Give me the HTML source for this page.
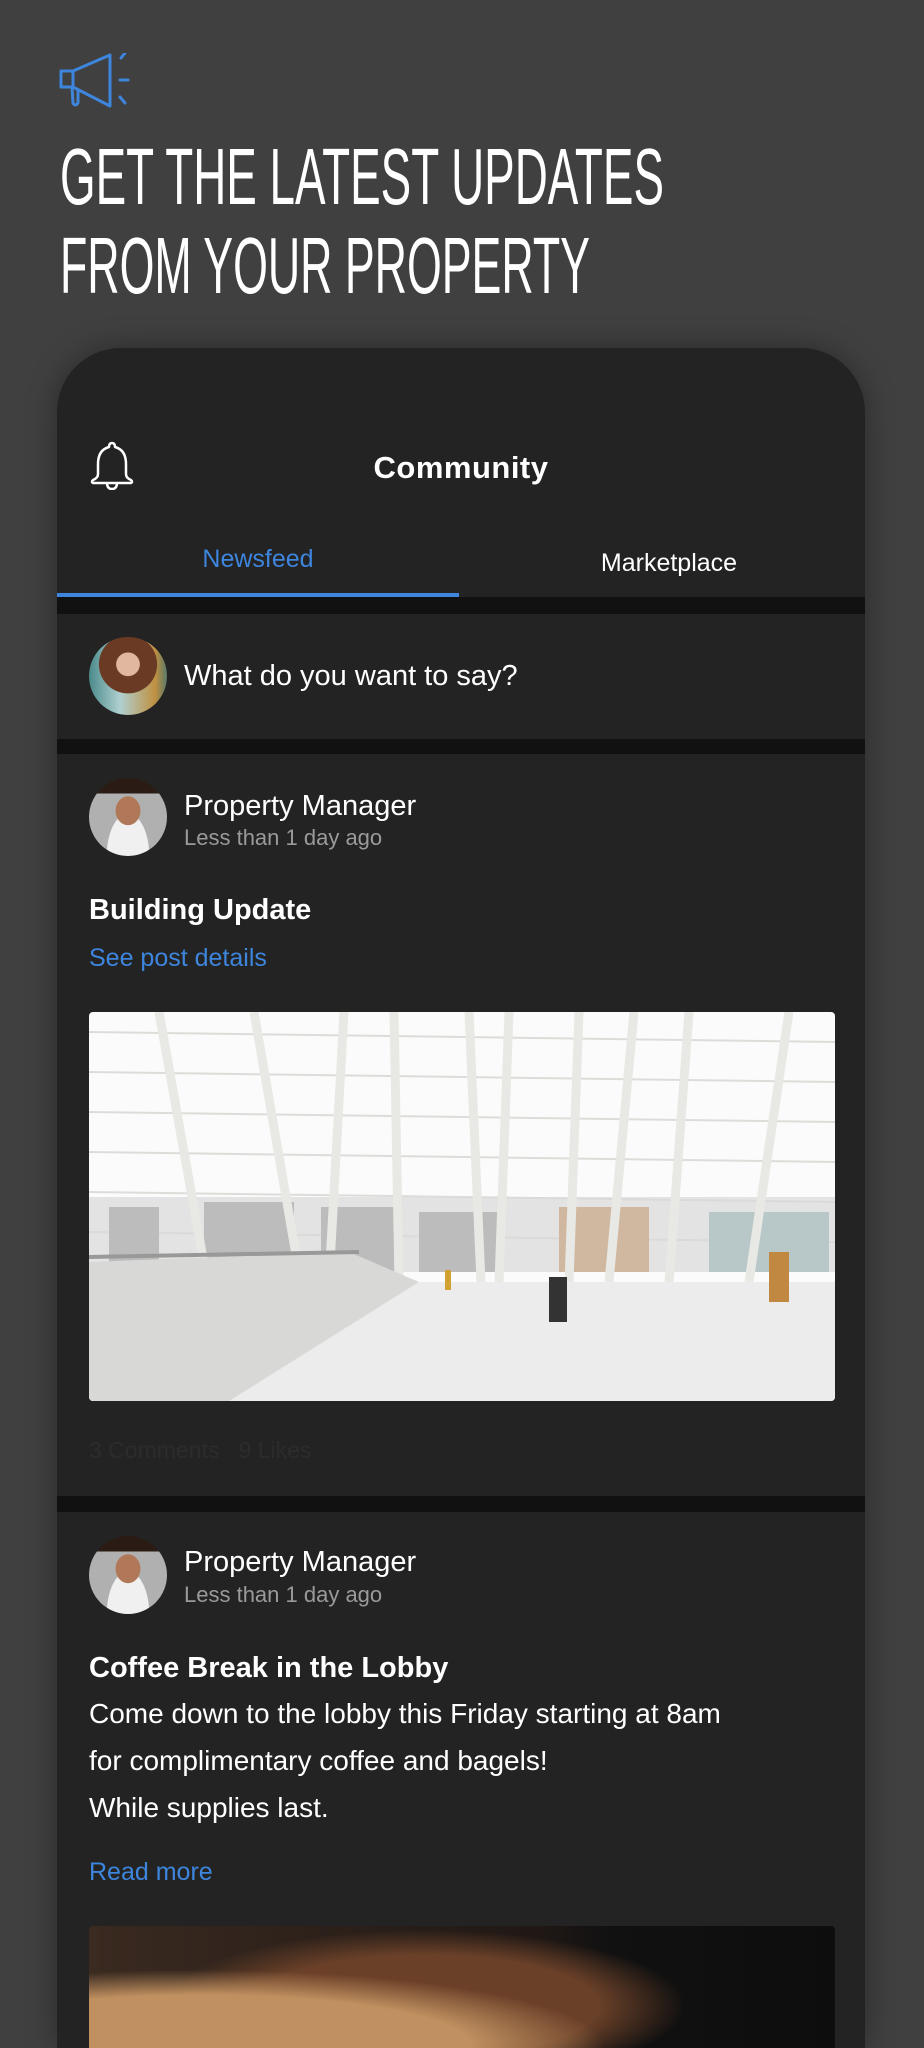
<!DOCTYPE html>
<html><head><meta charset="utf-8"><style>
*{margin:0;padding:0;box-sizing:border-box}
body{width:924px;height:2000px;background:#404040;overflow:hidden;position:relative;font-family:"Liberation Sans",sans-serif}
.a{position:absolute;white-space:nowrap}
.card{position:absolute;left:57px;top:348px;width:808px;height:1700px;background:#232323;border-radius:64px 64px 0 0;box-shadow:0 0 30px rgba(0,0,0,.35);overflow:hidden}
.band{position:absolute;left:0;width:808px;background:#111}
.w{color:#fff}
.blue{color:#3d85dd}
.av{position:absolute;width:78px;height:78px;border-radius:50%;overflow:hidden}
</style></head><body>
<svg class="a" style="left:58px;top:53px" width="74" height="56" viewBox="0 0 74 56" fill="none" stroke="#3d85dd" stroke-width="3" stroke-linecap="round" stroke-linejoin="round">
<path d="M3 18 L3 34 L15 34 L52 53 L52 2 L15 18 Z"/><path d="M15 18 L15 34"/><path d="M14 34 L15 50 Q17 54 20 50 L20 37"/>
<path d="M63 5 L67 0"/><path d="M62 27 L70 27"/><path d="M62 44 L67 50"/>
</svg>
<svg class="a" style="left:0;top:140px" width="924" height="160">
<text x="60" y="64" fill="#fff" font-family="Liberation Sans Narrow, Liberation Sans, sans-serif" font-size="80" textLength="604" lengthAdjust="spacingAndGlyphs">GET THE LATEST UPDATES</text>
<text x="60" y="153" fill="#fff" font-family="Liberation Sans Narrow, Liberation Sans, sans-serif" font-size="80" textLength="530" lengthAdjust="spacingAndGlyphs">FROM YOUR PROPERTY</text>
</svg>
<div class="card">
<svg class="a" style="left:32px;top:92px" width="46" height="50" viewBox="0 0 46 50" fill="none" stroke="#fff" stroke-width="2.5" stroke-linejoin="round">
<path d="M23 3 Q20 3 20 7 Q9 10 9 24 L9 34 Q9 38 4 40 Q2 42 4 43 L42 43 Q44 42 42 40 Q37 38 37 34 L37 24 Q37 10 26 7 Q26 3 23 3 Z"/><path d="M18 43 Q18 49 23 49 Q28 49 28 43"/>
</svg>
<div class="a w" style="left:0;width:808px;text-align:center;top:100px;font-size:31px;font-weight:bold;line-height:40px;letter-spacing:.5px">Community</div>
<div class="a blue" style="left:0;width:402px;text-align:center;top:195px;font-size:25px;line-height:32px">Newsfeed</div>
<div class="a w" style="left:402px;width:420px;text-align:center;top:199px;font-size:25px;line-height:32px">Marketplace</div>
<div class="a" style="left:0;top:245px;width:402px;height:4px;background:#3d85dd"></div>
<div class="band" style="top:249px;height:17px"></div>
<div class="av" style="left:32px;top:289px;background:radial-gradient(circle at 50% 35%,#e0b8a0 0 18%,#6a3a25 19% 45%,transparent 46%),linear-gradient(90deg,#4a8a8a,#b0d0d0 40%,#c09040 85%,#5a7a6a)"></div>
<div class="a w" style="left:127px;top:310px;font-size:29px;line-height:36px">What do you want to say?</div>
<div class="band" style="top:391px;height:15px"></div>
<div class="av" style="left:32px;top:430px;background:radial-gradient(ellipse at 50% 42%,#b07858 0 22%,transparent 23%),radial-gradient(ellipse at 50% 100%,#f0f0f0 0 38%,transparent 39%),linear-gradient(#2a1c15 0 20%,#b0b0b0 20%)"></div>
<div class="a w" style="left:127px;top:440px;font-size:29px;line-height:36px">Property Manager</div>
<div class="a" style="left:127px;top:476px;font-size:22px;line-height:28px;color:#9a9a9a">Less than 1 day ago</div>
<div class="a w" style="left:32px;top:544px;font-size:29px;font-weight:bold;line-height:36px">Building Update</div>
<div class="a blue" style="left:32px;top:594px;font-size:25px;line-height:32px">See post details</div>
<svg class="a" style="left:32px;top:664px;border-radius:4px" width="746" height="389" viewBox="0 0 746 389">
<rect width="746" height="389" fill="#fbfbfb"/>
<g stroke="#dcdcd8" stroke-width="3">
<path d="M0 20 L746 30M0 60 L746 70M0 100 L746 110M0 140 L746 150M0 180 L746 190M0 220 L746 230" stroke-width="2"/>
</g>
<rect x="0" y="185" width="746" height="75" fill="#d8d8d8" opacity=".7"/>
<g fill="#bcbcbc"><rect x="20" y="195" width="50" height="60"/><rect x="115" y="190" width="90" height="70"/><rect x="232" y="195" width="80" height="65"/><rect x="330" y="200" width="80" height="60"/><rect x="470" y="195" width="90" height="65" fill="#d0b8a0"/><rect x="620" y="200" width="120" height="60" fill="#b8c8c8"/></g>
<g stroke="#e8e8e4" stroke-width="9"><path d="M70 0 L120 280M165 0 L210 260M255 0 L240 270M305 0 L310 270M380 0 L392 270M420 0 L410 270M490 0 L480 270M545 0 L520 270M600 0 L580 270M700 0 L660 270"/></g>
<rect x="0" y="270" width="746" height="119" fill="#ececec"/>
<path d="M0 250 L260 240 L330 270 L140 389 L0 389 Z" fill="#d8d8d6"/>
<path d="M0 245 L270 240" stroke="#999" stroke-width="4"/>
<rect x="680" y="240" width="20" height="50" fill="#c08840"/>
<rect x="460" y="265" width="18" height="45" fill="#333"/>
<rect x="356" y="258" width="6" height="20" fill="#d0a030"/>
</svg>
<div class="a" style="left:32px;top:1088px;font-size:23px;line-height:28px;color:#2c2c2c">3 Comments &nbsp; 9 Likes</div>
<div class="band" style="top:1148px;height:16px"></div>
<div class="av" style="left:32px;top:1188px;background:radial-gradient(ellipse at 50% 42%,#b07858 0 22%,transparent 23%),radial-gradient(ellipse at 50% 100%,#f0f0f0 0 38%,transparent 39%),linear-gradient(#2a1c15 0 20%,#b0b0b0 20%)"></div>
<div class="a w" style="left:127px;top:1196px;font-size:29px;line-height:36px">Property Manager</div>
<div class="a" style="left:127px;top:1233px;font-size:22px;line-height:28px;color:#9a9a9a">Less than 1 day ago</div>
<div class="a w" style="left:32px;top:1302px;font-size:29px;font-weight:bold;line-height:36px">Coffee Break in the Lobby</div>
<div class="a w" style="left:32px;top:1342px;font-size:28px;line-height:47px">Come down to the lobby this Friday starting at 8am<br>for complimentary coffee and bagels!<br>While supplies last.</div>
<div class="a blue" style="left:32px;top:1508px;font-size:25px;line-height:32px">Read more</div>
<div class="a" style="left:32px;top:1578px;width:746px;height:200px;border-radius:4px;background:radial-gradient(ellipse at 15% 60%,#c09060 0 30%,transparent 45%),radial-gradient(ellipse at 45% 40%,#6a4028 0 30%,transparent 45%),linear-gradient(90deg,#3a2a20,#201815 60%,#111 70%,#0d0d0d)"></div>
</div>
</body></html>
